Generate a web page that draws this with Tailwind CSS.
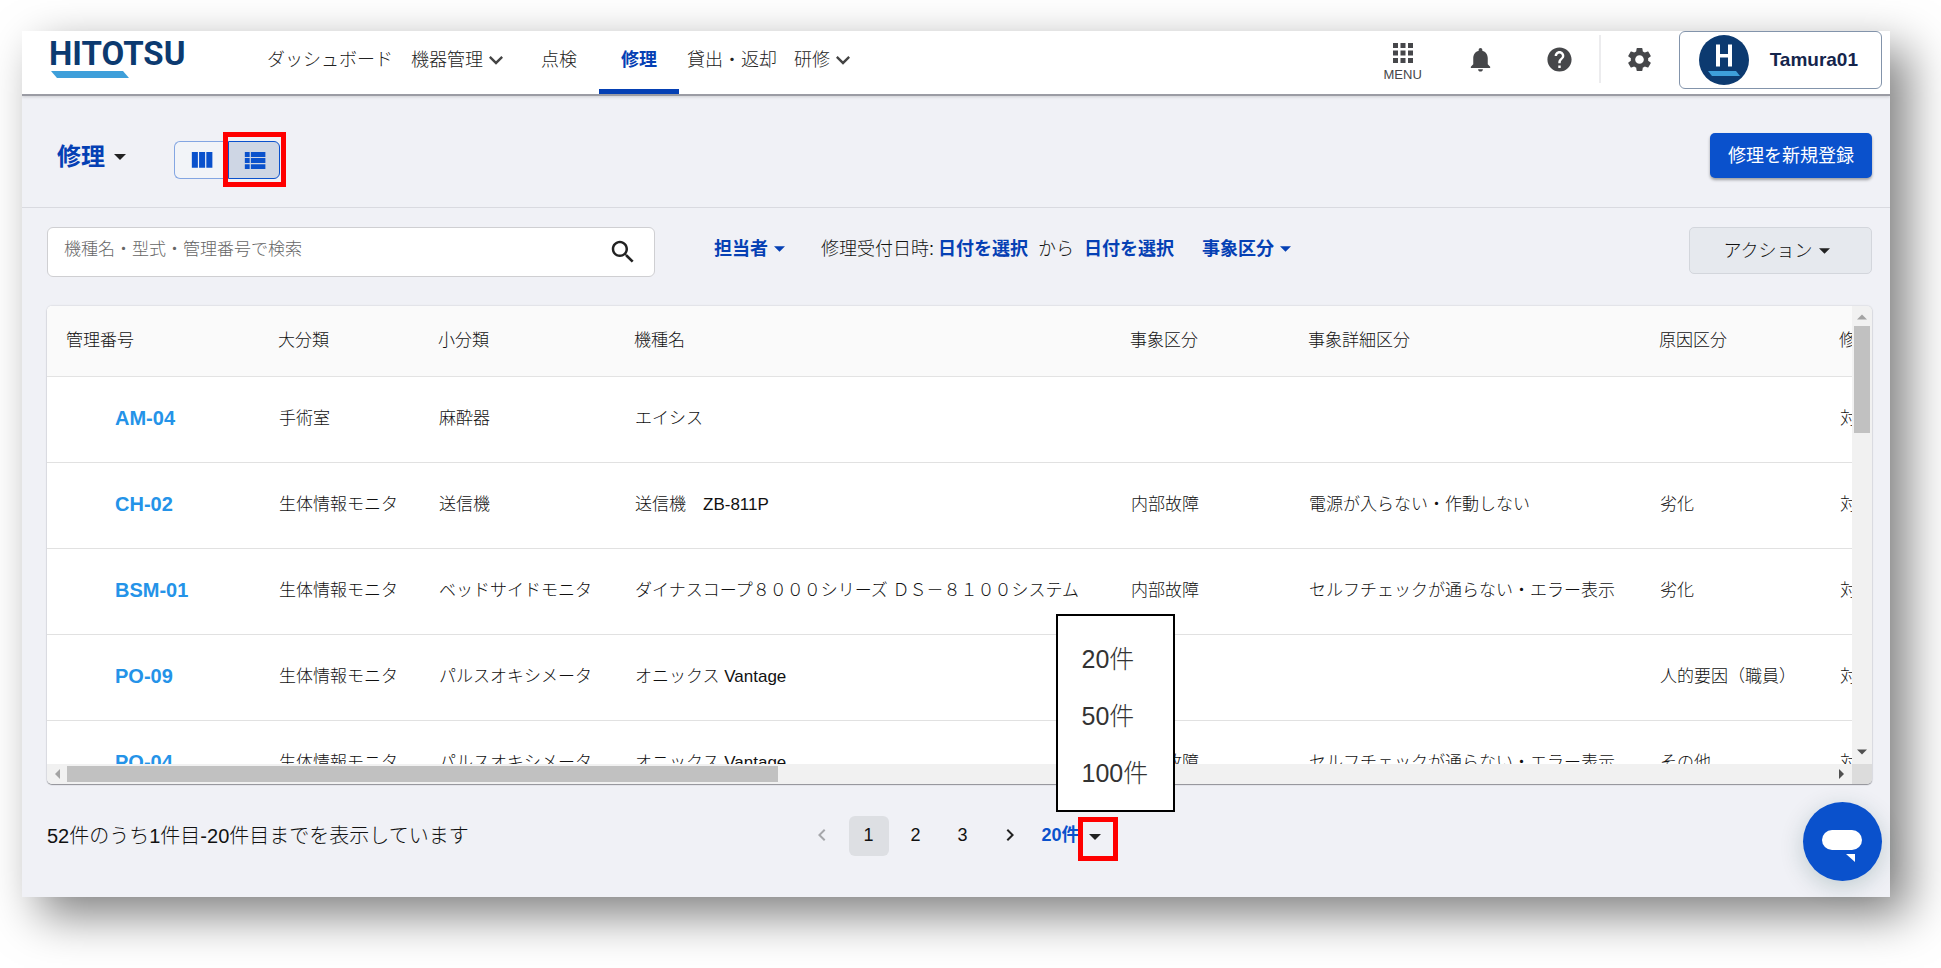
<!DOCTYPE html>
<html lang="ja">
<head>
<meta charset="utf-8">
<title>HITOTSU 修理</title>
<script src="https://cdn.jsdelivr.net/npm/@tailwindcss/browser@4"></script>
</head>
<body class="min-h-screen bg-white pt-[31px] pl-[22px] pr-[51px] pb-[71px] font-['Liberation_Sans','Noto_Sans_CJK_JP',sans-serif] font-light text-[17px] leading-6 text-[#111]">
<svg class="hidden">
  <symbol id="caret" viewBox="0 0 12 6"><path d="M0 0h12L6 6z"/></symbol>
  <symbol id="chev" viewBox="6 8 12 8"><path d="M16.59 8.59 12 13.17 7.41 8.59 6 10l6 6 6-6z"/></symbol>
</svg>
<div class="relative bg-[#f0f1f6] pb-9 shadow-[18px_18px_44px_rgba(0,0,0,0.5)]">

  <header class="relative flex h-[63px] items-stretch bg-white shadow-[0_1px_0_1px_#9b9ca4,0_3px_3px_rgba(0,0,0,0.15)] [clip-path:inset(0_0_-8px_0)]">
    <a href="#" aria-label="HITOTSU" class="ml-[27px] w-[138px] pt-1.5">
      <span class="block font-['Roboto',sans-serif] text-[33px] leading-[34px] font-bold text-[#0c3a70]">HITOTSU</span>
      <svg class="ml-0.5 h-[7px] w-[78px]" viewBox="0 0 78 7"><path d="M0 0h72l6 7H6z" fill="#3e9fda"/></svg>
    </a>
    <nav class="ml-20 flex items-stretch text-[18px] leading-[58px] whitespace-nowrap text-[#222]">
      <a href="#" class="pr-[18px]">ダッシュボード</a>
      <a href="#" class="flex items-center gap-[6px] pr-[38px] pb-[5px]">機器管理<svg class="h-[10px] w-[14px] fill-[#444]"><use href="#chev"/></svg></a>
      <a href="#" class="pr-[22px]">点検</a>
      <a href="#" aria-current="page" class="border-b-[5px] border-[#0540b4] px-[22px] font-bold text-[#0540b4]">修理</a>
      <a href="#" class="pr-[17px] pl-[8px]">貸出・返却</a>
      <a href="#" class="flex items-center gap-[6px] pb-[5px]">研修<svg class="h-[10px] w-[14px] fill-[#444]"><use href="#chev"/></svg></a>
    </nav>
    <div class="ml-auto flex items-stretch fill-[#46474a] text-[#46474a]">
      <button class="flex w-[78px] flex-col items-center pt-[7px] text-[13px] leading-[14px] font-medium"><svg class="size-[30px]" viewBox="0 0 24 24"><path d="M4 8h4V4H4v4zm6 12h4v-4h-4v4zm-6 0h4v-4H4v4zm0-6h4v-4H4v4zm6 0h4v-4h-4v4zm6-10v4h4V4h-4zm-6 4h4V4h-4v4zm6 6h4v-4h-4v4zm0 6h4v-4h-4v4z"/></svg>MENU</button>
      <button aria-label="通知" class="flex w-[78px] justify-center pt-[14px]"><svg class="size-[29px]" viewBox="0 0 24 24"><path d="M12 22c1.1 0 2-.9 2-2h-4c0 1.1.89 2 2 2zm6-6v-5c0-3.07-1.64-5.64-4.5-6.32V4c0-.83-.67-1.5-1.5-1.5s-1.5.67-1.5 1.5v.68C7.63 5.36 6 7.92 6 11v5l-2 2v1h16v-1l-2-2z"/></svg></button>
      <button aria-label="ヘルプ" class="flex w-[79px] justify-center pt-[14px]"><svg class="size-[29px]" viewBox="0 0 24 24"><path d="M12 2C6.48 2 2 6.48 2 12s4.48 10 10 10 10-4.48 10-10S17.52 2 12 2zm1 17h-2v-2h2v2zm2.07-7.75-.9.92C13.45 12.9 13 13.5 13 15h-2v-.5c0-1.1.45-2.1 1.17-2.83l1.24-1.26c.37-.36.59-.86.59-1.41 0-1.1-.9-2-2-2s-2 .9-2 2H8c0-2.21 1.79-4 4-4s4 1.79 4 4c0 .88-.36 1.68-.93 2.25z"/></svg></button>
      <div class="mt-1 h-12 w-0.5 bg-[#ececee]"></div>
      <button aria-label="設定" class="flex w-[78px] justify-center pt-[14px]"><svg class="size-[29px]" viewBox="0 0 24 24"><path d="M19.14 12.94c.04-.3.06-.61.06-.94 0-.32-.02-.64-.07-.94l2.03-1.58c.18-.14.23-.41.12-.61l-1.92-3.32c-.12-.22-.37-.29-.59-.22l-2.39.96c-.5-.38-1.03-.7-1.62-.94l-.36-2.54c-.04-.24-.24-.41-.48-.41h-3.84c-.24 0-.43.17-.47.41l-.36 2.54c-.59.24-1.13.57-1.62.94l-2.39-.96c-.22-.08-.47 0-.59.22L2.74 8.87c-.12.21-.08.47.12.61l2.03 1.58c-.05.3-.09.63-.09.94s.02.64.07.94l-2.03 1.58c-.18.14-.23.41-.12.61l1.92 3.32c.12.22.37.29.59.22l2.39-.96c.5.38 1.03.7 1.62.94l.36 2.54c.05.24.24.41.48.41h3.84c.24 0 .44-.17.47-.41l.36-2.54c.59-.24 1.13-.56 1.62-.94l2.39.96c.22.08.47 0 .59-.22l1.92-3.32c.12-.22.07-.47-.12-.61l-2.01-1.58zM12 15.6c-1.98 0-3.6-1.62-3.6-3.6s1.62-3.6 3.6-3.6 3.6 1.62 3.6 3.6-1.62 3.6-3.6 3.6z"/></svg></button>
      <button class="mr-2 flex h-[58px] items-center gap-[21px] rounded-md border border-[#8394ab] pr-[23px] pl-[19px] text-[19px] font-bold text-[#14254c]">
        <svg class="size-[50px]" viewBox="0 0 50 50"><circle cx="25" cy="25" r="25" fill="#0c3a70"/><path d="M17 9.500h4v9.500h8v-9.500h4v22h-4v-9h-8v9h-4z" fill="#fff"/><path d="M9 36h28l4 5H13z" fill="#3e9fda"/></svg>
        Tamura01
      </button>
    </div>
  </header>

  <div class="flex h-[114px] items-start border-b border-[#d9dae0] pt-[39px] pr-[18px] pl-[35px]">
    <button class="mt-[9px] flex items-center gap-[9px] text-[24px] leading-[30px] font-bold text-[#0540b4]">修理<svg class="h-[6px] w-[12px] fill-[#222]"><use href="#caret"/></svg></button>
    <div class="relative mt-2 ml-12 flex h-[38px] fill-[#0a51cc]">
      <button aria-label="カンバン表示" class="flex w-[54px] items-center justify-center rounded-l-md border border-r-0 border-[#84a6e2] bg-[#f2f4f8]"><svg class="size-[29px]" viewBox="0 0 24 24"><path d="M10 18h5V5h-5v13zm-6 0h5V5H4v13zM16 5v13h5V5h-5z"/></svg></button>
      <button aria-label="リスト表示" aria-pressed="true" class="flex w-[52px] items-center justify-center rounded-r-md border border-[#0a51cc] bg-[#ced6e4]"><svg class="size-[29px]" viewBox="0 0 24 24"><path d="M4 14h4v-4H4v4zm0 5h4v-4H4v4zM4 9h4V5H4v4zm5 5h12v-4H9v4zm0 5h12v-4H9v4zM9 5v4h12V5H9z"/></svg></button>
      <div class="absolute -top-[9px] -right-[6px] h-[55px] w-[63px] border-[5px] border-[#f00]"></div>
    </div>
    <button class="ml-auto h-[45px] rounded-[5px] bg-[#0a51cc] px-[18px] text-[18px] font-normal text-white shadow-[0_2px_3px_rgba(0,0,0,0.35)]">修理を新規登録</button>
  </div>

  <div class="flex items-start pt-[19px] pr-[18px] pl-[25px]">
    <div class="relative w-[608px]">
      <input type="text" aria-label="機種名・型式・管理番号で検索" placeholder="機種名・型式・管理番号で検索" class="h-[50px] w-full rounded-md border border-[#cfcfd2] bg-white pr-14 pb-1 pl-4 text-[17px] placeholder:text-[#666]">
      <button aria-label="検索する" class="absolute top-[10px] right-[17px]"><svg class="size-[30px] fill-[#222]" viewBox="0 0 24 24"><path d="M15.500 14h-.79l-.28-.27C15.410 12.590 16 11.110 16 9.500 16 5.910 13.090 3 9.500 3S3 5.910 3 9.500 5.910 16 9.500 16c1.610 0 3.090-.59 4.230-1.570l.27.28v.79l5 4.990L20.490 19l-4.990-5zm-6 0C7.010 14 5 11.990 5 9.500S7.010 5 9.500 5 14 7.010 14 9.500 11.990 14 9.500 14z"/></svg></button>
    </div>
    <div class="mt-[10px] ml-[59px] flex items-center text-[18px] whitespace-nowrap">
      <button class="flex items-center gap-1.5 fill-[#0540b4] font-bold text-[#0540b4]">担当者<svg class="h-[6px] w-[11px]"><use href="#caret"/></svg></button>
      <span class="ml-9">修理受付日時:</span>
      <button class="ml-1 font-bold text-[#0540b4]">日付を選択</button>
      <span class="mx-[10px]">から</span>
      <button class="font-bold text-[#0540b4]">日付を選択</button>
      <button class="ml-7 flex items-center gap-1.5 fill-[#0540b4] font-bold text-[#0540b4]">事象区分<svg class="h-[6px] w-[11px]"><use href="#caret"/></svg></button>
    </div>
    <button class="ml-auto flex h-[47px] w-[183px] items-center justify-center gap-1.5 rounded-[5px] border border-[#d3d6dc] bg-[#e6e9ee] pr-2 text-[18px]">アクション<svg class="h-[6px] w-[11px] fill-[#222]"><use href="#caret"/></svg></button>
  </div>

  <section class="mt-[29px] mr-[18px] ml-[25px] grid grid-cols-[minmax(0,1fr)_20px] overflow-hidden rounded-[5px] shadow-[0_1px_1px_#8f9096,0_0_2px_rgba(0,0,0,0.2)]">
    <div class="h-[458px] overflow-hidden bg-white">
      <table class="w-[2000px] table-fixed border-collapse text-left whitespace-nowrap">
        <colgroup><col class="w-[212px]"><col class="w-[160px]"><col class="w-[196px]"><col class="w-[496px]"><col class="w-[178px]"><col class="w-[351px]"><col class="w-[180px]"><col></colgroup>
        <thead>
          <tr class="h-[70px] border-b border-[#e3e3e3] bg-[#fafafa] [&>th]:px-[19px] [&>th]:font-light"><th>管理番号</th><th>大分類</th><th>小分類</th><th>機種名</th><th>事象区分</th><th>事象詳細区分</th><th>原因区分</th><th>修理状況</th></tr>
        </thead>
        <tbody class="[&>tr]:h-[86px] [&>tr]:border-b [&>tr]:border-[#e1e1e1] [&_td]:px-5 [&_td:first-child]:pl-[68px] [&_a]:text-[20px] [&_a]:font-bold [&_a]:text-[#2493e8]">
          <tr><td><a href="#">AM-04</a></td><td>手術室</td><td>麻酔器</td><td>エイシス</td><td></td><td></td><td></td><td>対応中</td></tr>
          <tr><td><a href="#">CH-02</a></td><td>生体情報モニタ</td><td>送信機</td><td>送信機　ZB-811P</td><td>内部故障</td><td>電源が入らない・作動しない</td><td>劣化</td><td>対応中</td></tr>
          <tr><td><a href="#">BSM-01</a></td><td>生体情報モニタ</td><td>ベッドサイドモニタ</td><td>ダイナスコープ８０００シリーズ ＤＳ－８１００システム</td><td>内部故障</td><td>セルフチェックが通らない・エラー表示</td><td>劣化</td><td>対応中</td></tr>
          <tr><td><a href="#">PO-09</a></td><td>生体情報モニタ</td><td>パルスオキシメータ</td><td>オニックス Vantage</td><td></td><td></td><td>人的要因（職員）</td><td>対応中</td></tr>
          <tr><td><a href="#">PO-04</a></td><td>生体情報モニタ</td><td>パルスオキシメータ</td><td>オニックス Vantage</td><td>内部故障</td><td>セルフチェックが通らない・エラー表示</td><td>その他</td><td>対応中</td></tr>
        </tbody>
      </table>
    </div>
    <div class="flex flex-col items-center bg-[#f1f1f1]">
      <svg class="mt-2 h-[6px] w-[10px] rotate-180 fill-[#a3a3a3]" viewBox="0 0 12 6"><path d="M0 0h12L6 6z"/></svg>
      <div class="mt-[6px] h-[107px] w-4 bg-[#c1c1c1]"></div>
      <svg class="mt-auto mb-[9px] h-[6px] w-[10px] fill-[#505050]" viewBox="0 0 12 6"><path d="M0 0h12L6 6z"/></svg>
    </div>
    <div class="flex h-5 items-center bg-[#f1f1f1]">
      <svg class="ml-2 h-[10px] w-[5px] fill-[#a3a3a3]" viewBox="0 0 5 10"><path d="M5 0v10L0 5z"/></svg>
      <div class="ml-[7px] h-4 w-[39.4%] bg-[#c1c1c1]"></div>
      <svg class="mr-2 ml-auto h-[10px] w-[5px] fill-[#505050]" viewBox="0 0 5 10"><path d="M0 0v10l5-5z"/></svg>
    </div>
    <div class="bg-[#dcdcdc]"></div>
  </section>

  <footer class="mt-8 mr-[18px] ml-[25px] grid grid-cols-[1fr_auto_1fr] items-center">
    <p class="pb-1.5 text-[20px]">52件のうち1件目-20件目までを表示しています</p>
    <div class="flex items-start gap-[7px] text-[18px] [&>button]:size-10 [&>button]:rounded-md [&>button]:pb-[3px]">
      <button aria-label="前のページ" disabled class="flex items-center justify-center"><svg class="h-3 w-2 fill-[#a6a7ab]" viewBox="8 6 8 12"><path d="M15.410 7.410 14 6l-6 6 6 6 1.410-1.410L10.830 12z"/></svg></button>
      <button aria-current="page" class="bg-[#dddfe3]">1</button>
      <button>2</button>
      <button>3</button>
      <button aria-label="次のページ" class="flex items-center justify-center"><svg class="h-3 w-2 fill-[#222]" viewBox="8 6 8 12"><path d="M10 6 8.590 7.410 13.170 12l-4.580 4.590L10 18l6-6z"/></svg></button>
      <div class="relative mt-px ml-1 flex h-[44px] w-[77px] items-center">
        <button aria-haspopup="listbox" aria-expanded="true" class="flex w-full items-center gap-[9px] pb-2 pl-px text-[18px] font-bold whitespace-nowrap text-[#0a51cc]">20件<svg class="mt-1 h-[6px] w-[12px] shrink-0 fill-[#222]"><use href="#caret"/></svg></button>
        <div class="absolute top-0 right-0 h-[44px] w-10 border-[5px] border-[#f00]"></div>
        <ul role="listbox" aria-label="表示件数" class="absolute right-[-57px] bottom-[49px] h-[198px] w-[119px] border-2 border-black bg-white pt-[15px] pl-6 text-[25px] leading-[57px] text-[#333]">
          <li role="option" aria-selected="true">20件</li><li role="option">50件</li><li role="option">100件</li>
        </ul>
      </div>
    </div>
  </footer>

  <button aria-label="チャットを開く" class="absolute right-2 bottom-4 size-[79px] rounded-full bg-[#0a51cc] shadow-[0_6px_24px_rgba(0,60,60,0.2)]">
    <svg class="size-full" viewBox="0 0 79 79"><rect x="19" y="28" width="40" height="20" rx="10" fill="#fff"/><path d="M43 52h9v8z" fill="#fff"/></svg>
  </button>
</div>
</body>
</html>
